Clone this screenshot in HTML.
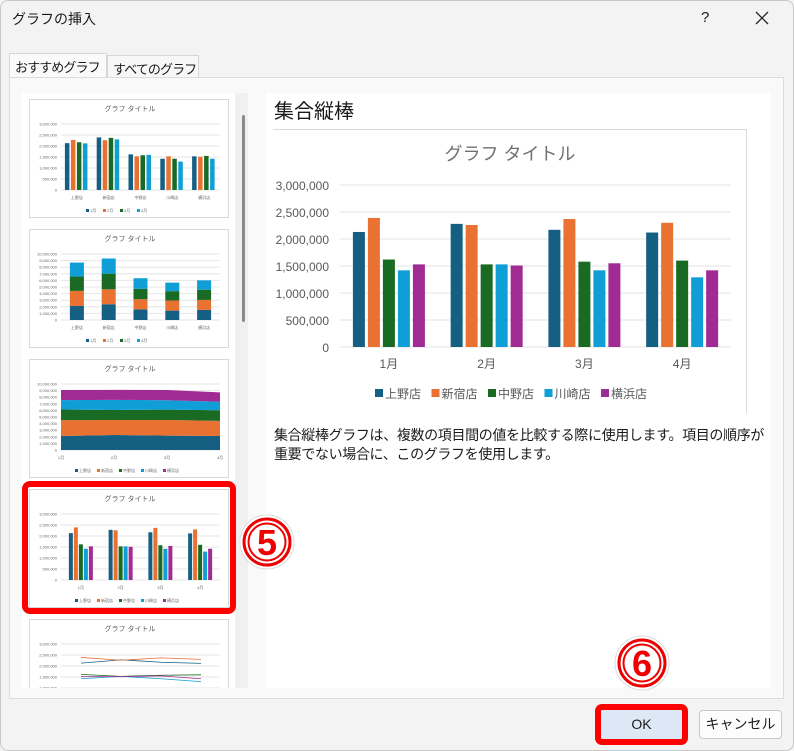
<!DOCTYPE html>
<html><head><meta charset="utf-8"><style>
*{margin:0;padding:0;box-sizing:border-box}
body{width:794px;height:751px;background:#f3f3f3;font-family:"Liberation Sans","Noto Sans CJK JP",sans-serif;position:relative;overflow:hidden;color:#1a1a1a}
.abs{position:absolute}
.thumb{position:absolute;left:29px;width:200px;height:119px;background:#fff;border:1px solid #d9d9d9}
</style></head><body>
<div class="abs" style="left:0;top:0;width:794px;height:751px;border:1px solid #c8c8c8;border-radius:8px"></div>
<div class="abs" style="left:12px;top:9px;font-size:14px">グラフの挿入</div>
<div class="abs" style="left:701px;top:9px;font-size:15px">?</div>
<svg class="abs" style="left:755px;top:11px" width="14" height="14"><path d="M1 1L13 13M13 1L1 13" stroke="#222" stroke-width="1.3"/></svg>
<div class="abs" style="left:9px;top:53px;width:98px;height:24px;background:#fafafa;border:1px solid #d6d6d6;border-bottom:none;font-size:13px;letter-spacing:-0.9px;white-space:nowrap;overflow:hidden;padding:3px 0 0 5px">おすすめグラフ</div>
<div class="abs" style="left:107px;top:55px;width:92px;height:22px;background:#f7f7f7;border:1px solid #d6d6d6;border-bottom:none;font-size:13px;letter-spacing:-0.9px;white-space:nowrap;overflow:hidden;padding:3px 0 0 5px">すべてのグラフ</div>
<div class="abs" style="left:9px;top:77px;width:775px;height:622px;background:#f9f9f9;border:1px solid #dcdcdc"></div>
<div class="abs" style="left:22px;top:93px;width:226px;height:595px;background:#fff"></div>
<div class="abs" style="left:235px;top:93px;width:13px;height:595px;background:#f0f0f0"></div>
<div class="abs" style="left:242px;top:115px;width:3px;height:207px;background:#8a8a8a;border-radius:2px"></div>
<div class="abs" style="left:266px;top:93px;width:504px;height:595px;background:#fff"></div>
<div class="abs" style="left:274px;top:95px;font-size:20px">集合縦棒</div>
<div class="abs" style="left:273px;top:129px;width:474px;height:284px;border-top:1px solid #d9d9d9;border-right:1px solid #d9d9d9"></div>
<svg class="abs" style="left:0;top:0" width="794" height="751" id="main"></svg>
<div class="abs" style="left:274px;top:426px;width:500px;font-size:14px;line-height:19px;letter-spacing:-0.35px">集合縦棒グラフは、複数の項目間の値を比較する際に使用します。項目の順序が重要でない場合に、このグラフを使用します。</div>
<div class="thumb" style="top:99px"><svg width="200" height="119" id="t1"></svg></div>
<div class="thumb" style="top:229px"><svg width="200" height="119" id="t2"></svg></div>
<div class="thumb" style="top:359px"><svg width="200" height="119" id="t3"></svg></div>
<div class="thumb" style="top:489px"><svg width="200" height="119" id="t4"></svg></div>
<div class="thumb" style="top:619px;height:69px;border-bottom:none;overflow:hidden"><svg width="200" height="119" id="t5"></svg></div>
<div class="abs" style="left:22px;top:481px;width:214px;height:133px;border:6px solid #f00;border-radius:8px"></div>
<div class="abs" style="left:595px;top:704px;width:93px;height:41px;border:6px solid #f00;border-radius:7px;background:#dce8f5;font-size:14px;text-align:center;line-height:29px">OK</div>
<div class="abs" style="left:699px;top:710px;width:83px;height:29px;border:1px solid #c8c8c8;border-radius:4px;background:#fdfdfd;font-size:14px;text-align:center;line-height:27px">キャンセル</div>
<svg class="abs" style="left:0;top:0;pointer-events:none" width="794" height="751">
<g transform="translate(267,542)"><circle r="27" fill="#fff" stroke="#ddd"/><circle r="23" fill="none" stroke="#e00" stroke-width="3"/><circle r="18.5" fill="none" stroke="#e00" stroke-width="2"/><text y="13" text-anchor="middle" font-size="36" font-weight="bold" fill="#e00" font-family="Liberation Sans">5</text></g>
<g transform="translate(642,663)"><circle r="27" fill="#fff" stroke="#ddd"/><circle r="23" fill="none" stroke="#e00" stroke-width="3"/><circle r="18.5" fill="none" stroke="#e00" stroke-width="2"/><text y="13" text-anchor="middle" font-size="36" font-weight="bold" fill="#e00" font-family="Liberation Sans">6</text></g>
</svg>
<script>
var C=["#156082","#e97132","#196b24","#0f9ed5","#a02b93"];
var NS="http://www.w3.org/2000/svg";
function el(s,t,a,txt){var e=document.createElementNS(NS,t);for(var k in a)e.setAttribute(k,a[k]);if(txt!=null)e.textContent=txt;s.appendChild(e);return e;}
var V=[[2130,2390,1620,1420,1530],[2280,2260,1530,1530,1510],[2170,2370,1580,1420,1550],[2120,2300,1600,1290,1420]];
var stores=["上野店","新宿店","中野店","川崎店","横浜店"],months=["1月","2月","3月","4月"];
var m=document.getElementById("main");
el(m,"text",{x:510,y:160,"text-anchor":"middle","font-size":18,fill:"#707070"},"グラフ タイトル");
for(var i=0;i<=6;i++){var y=347-27*i;el(m,"line",{x1:340,x2:731,y1:y,y2:y,stroke:"#e3e3e3"});
el(m,"text",{x:329,y:y+5,"text-anchor":"end","font-size":12,fill:"#595959"},i?(i*500).toLocaleString("en")+",000":"0");}
for(var g=0;g<4;g++){var cx=340+97.75*g+48.9;for(var b=0;b<5;b++){var h=V[g][b]*0.054;el(m,"rect",{x:cx-36+15*b,y:347-h,width:12,height:h,fill:C[b]});}
el(m,"text",{x:cx,y:368,"text-anchor":"middle","font-size":12,fill:"#595959"},months[g]);}
var lx=375;for(var s=0;s<5;s++){el(m,"rect",{x:lx,y:389,width:8,height:8,fill:C[s]});el(m,"text",{x:lx+10,y:398,"font-size":12,fill:"#595959"},stores[s]);lx+=56.5;}
function frame(sv,max,n){el(sv,"text",{x:100,y:11,"text-anchor":"middle","font-size":7,fill:"#595959"},"グラフ タイトル");
var top=24,bot=90;for(var i=0;i<=n;i++){var y=bot-(bot-top)*i/n;el(sv,"line",{x1:31,x2:190,y1:y,y2:y,stroke:"#e6e6e6"});
el(sv,"text",{x:27,y:y+1.5,"text-anchor":"end","font-size":4,fill:"#666"},i?(i*max/n).toLocaleString("en")+",000":"0");}return{top:top,bot:bot};}
function legend(sv,names,cols,y){var x=100-names.length*11;for(var i=0;i<names.length;i++){el(sv,"rect",{x:x,y:y-3,width:3,height:3,fill:cols[i]});el(sv,"text",{x:x+4,y:y,"font-size":4,fill:"#666"},names[i]);x+=22-(names.length==4?5:0);}}
var s1=document.getElementById("t1"),f=frame(s1,3000,6);
for(var st=0;st<5;st++){var cx=31+159/5*(st+0.5);for(var mo=0;mo<4;mo++){var h=V[mo][st]/3000*66;el(s1,"rect",{x:cx-12+6*mo,y:90-h,width:4.5,height:h,fill:C[mo]});}
el(s1,"text",{x:cx,y:99,"text-anchor":"middle","font-size":4,fill:"#666"},stores[st]);}
legend(s1,months,C,112);
var s2=document.getElementById("t2");frame(s2,10000,10);
for(var st=0;st<5;st++){var cx=31+159/5*(st+0.5),y=90;for(var mo=0;mo<4;mo++){var h=V[mo][st]/10000*66;y-=h;el(s2,"rect",{x:cx-7,y:y,width:14,height:h,fill:C[mo]});}
el(s2,"text",{x:cx,y:99,"text-anchor":"middle","font-size":4,fill:"#666"},stores[st]);}
legend(s2,months,C,112);
var s3=document.getElementById("t3");frame(s3,10000,10);
var base=[0,0,0,0];for(var st=0;st<5;st++){var up=[],dn=[];for(var mo=0;mo<4;mo++){var x=31+159*mo/3;dn.push(x+","+(90-base[mo]/10000*66));base[mo]+=V[mo][st];up.push(x+","+(90-base[mo]/10000*66));}
el(s3,"polygon",{points:up.join(" ")+" "+dn.reverse().join(" "),fill:C[st]});}
for(var mo=0;mo<4;mo++)el(s3,"text",{x:31+159*mo/3,y:99,"text-anchor":"middle","font-size":4,fill:"#666"},months[mo]);
legend(s3,stores,C,112);
var s4=document.getElementById("t4");frame(s4,3000,6);
for(var g=0;g<4;g++){var cx=31+159/4*(g+0.5);for(var b=0;b<5;b++){var h=V[g][b]/3000*66;el(s4,"rect",{x:cx-12+5*b,y:90-h,width:4,height:h,fill:C[b]});}
el(s4,"text",{x:cx,y:99,"text-anchor":"middle","font-size":4,fill:"#666"},months[g]);}
legend(s4,stores,C,112);
var s5=document.getElementById("t5");frame(s5,3000,6);
for(var st=0;st<5;st++){var p=[];for(var mo=0;mo<4;mo++)p.push((51+40*mo)+","+(90-V[mo][st]/3000*66));el(s5,"polyline",{points:p.join(" "),fill:"none",stroke:C[st],"stroke-width":0.8});}
</script>
</body></html>
